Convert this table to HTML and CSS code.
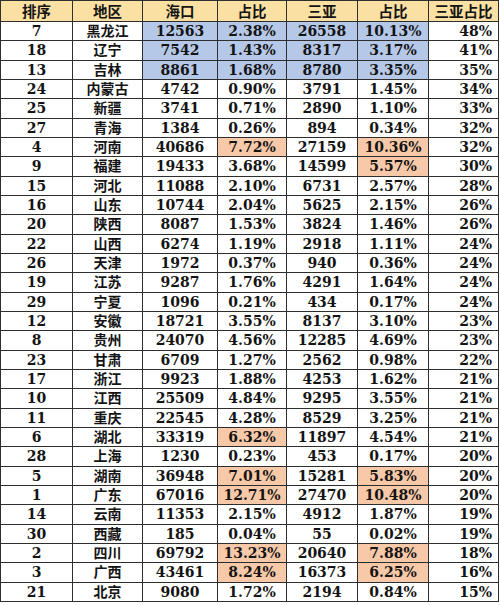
FILE: index.html
```html
<!DOCTYPE html>
<html lang="zh">
<head>
<meta charset="utf-8">
<title>海口 三亚 占比</title>
<link rel="stylesheet" href="styles.css">
</head>
<body>
<div class="sheet">
  <div class="h">排序</div><div class="h">地区</div><div class="h">海口</div><div class="h">占比</div><div class="h">三亚</div><div class="h">占比</div><div class="h">三亚占比</div>

  <div>7</div><div>黑龙江</div><div class="b">12563</div><div class="b">2.38%</div><div class="b">26558</div><div class="b">10.13%</div><div class="r">48%</div>
  <div>18</div><div>辽宁</div><div class="b">7542</div><div class="b">1.43%</div><div class="b">8317</div><div class="b">3.17%</div><div class="r">41%</div>
  <div>13</div><div>吉林</div><div class="b">8861</div><div class="b">1.68%</div><div class="b">8780</div><div class="b">3.35%</div><div class="r">35%</div>
  <div>24</div><div>内蒙古</div><div>4742</div><div>0.90%</div><div>3791</div><div>1.45%</div><div class="r">34%</div>
  <div>25</div><div>新疆</div><div>3741</div><div>0.71%</div><div>2890</div><div>1.10%</div><div class="r">33%</div>
  <div>27</div><div>青海</div><div>1384</div><div>0.26%</div><div>894</div><div>0.34%</div><div class="r">32%</div>
  <div>4</div><div>河南</div><div>40686</div><div class="o">7.72%</div><div>27159</div><div class="o">10.36%</div><div class="r">32%</div>
  <div>9</div><div>福建</div><div>19433</div><div>3.68%</div><div>14599</div><div class="o">5.57%</div><div class="r">30%</div>
  <div>15</div><div>河北</div><div>11088</div><div>2.10%</div><div>6731</div><div>2.57%</div><div class="r">28%</div>
  <div>16</div><div>山东</div><div>10744</div><div>2.04%</div><div>5625</div><div>2.15%</div><div class="r">26%</div>
  <div>20</div><div>陕西</div><div>8087</div><div>1.53%</div><div>3824</div><div>1.46%</div><div class="r">26%</div>
  <div>22</div><div>山西</div><div>6274</div><div>1.19%</div><div>2918</div><div>1.11%</div><div class="r">24%</div>
  <div>26</div><div>天津</div><div>1972</div><div>0.37%</div><div>940</div><div>0.36%</div><div class="r">24%</div>
  <div>19</div><div>江苏</div><div>9287</div><div>1.76%</div><div>4291</div><div>1.64%</div><div class="r">24%</div>
  <div>29</div><div>宁夏</div><div>1096</div><div>0.21%</div><div>434</div><div>0.17%</div><div class="r">24%</div>
  <div>12</div><div>安徽</div><div>18721</div><div>3.55%</div><div>8137</div><div>3.10%</div><div class="r">23%</div>
  <div>8</div><div>贵州</div><div>24070</div><div>4.56%</div><div>12285</div><div>4.69%</div><div class="r">23%</div>
  <div>23</div><div>甘肃</div><div>6709</div><div>1.27%</div><div>2562</div><div>0.98%</div><div class="r">22%</div>
  <div>17</div><div>浙江</div><div>9923</div><div>1.88%</div><div>4253</div><div>1.62%</div><div class="r">21%</div>
  <div>10</div><div>江西</div><div>25509</div><div>4.84%</div><div>9295</div><div>3.55%</div><div class="r">21%</div>
  <div>11</div><div>重庆</div><div>22545</div><div>4.28%</div><div>8529</div><div>3.25%</div><div class="r">21%</div>
  <div>6</div><div>湖北</div><div>33319</div><div class="o">6.32%</div><div>11897</div><div>4.54%</div><div class="r">21%</div>
  <div>28</div><div>上海</div><div>1230</div><div>0.23%</div><div>453</div><div>0.17%</div><div class="r">20%</div>
  <div>5</div><div>湖南</div><div>36948</div><div class="o">7.01%</div><div>15281</div><div class="o">5.83%</div><div class="r">20%</div>
  <div>1</div><div>广东</div><div>67016</div><div class="o">12.71%</div><div>27470</div><div class="o">10.48%</div><div class="r">20%</div>
  <div>14</div><div>云南</div><div>11353</div><div>2.15%</div><div>4912</div><div>1.87%</div><div class="r">19%</div>
  <div>30</div><div>西藏</div><div>185</div><div>0.04%</div><div>55</div><div>0.02%</div><div class="r">19%</div>
  <div>2</div><div>四川</div><div>69792</div><div class="o">13.23%</div><div>20640</div><div class="o">7.88%</div><div class="r">18%</div>
  <div>3</div><div>广西</div><div>43461</div><div class="o">8.24%</div><div>16373</div><div class="o">6.25%</div><div class="r">16%</div>
  <div>21</div><div>北京</div><div>9080</div><div>1.72%</div><div>2194</div><div>0.84%</div><div class="r">15%</div>
</div>
</body>
</html>
```

FILE: styles.css
```css
html, body {
  margin: 0;
  padding: 0;
  background: #ffffff;
}

.sheet {
  display: grid;
  grid-template-columns: 71px 69px 74px 68px 70px 70px 69px;
  grid-template-rows: 20px;
  grid-auto-rows: 18.34px;
  gap: 1px;
  padding: 1px;
  width: 499px;
  box-sizing: border-box;
  background: #2e2e2e;
  font-family: "DejaVu Serif", "Noto Sans CJK SC", serif;
  font-weight: 700;
  font-size: 14px;
  color: #141414;
}

.sheet > div {
  background: #ffffff;
  display: flex;
  align-items: center;
  justify-content: center;
  line-height: 1;
  white-space: nowrap;
  overflow: hidden;
}

.sheet > .h {
  background: #fbe0a3;
  font-family: "Noto Sans CJK SC", sans-serif;
  font-size: 14.5px;
}

.sheet > .b {
  background: #b6c8e8;
}

.sheet > .o {
  background: #f8c9a8;
}

.sheet > .r {
  justify-content: flex-end;
  padding-right: 6px;
}
```
